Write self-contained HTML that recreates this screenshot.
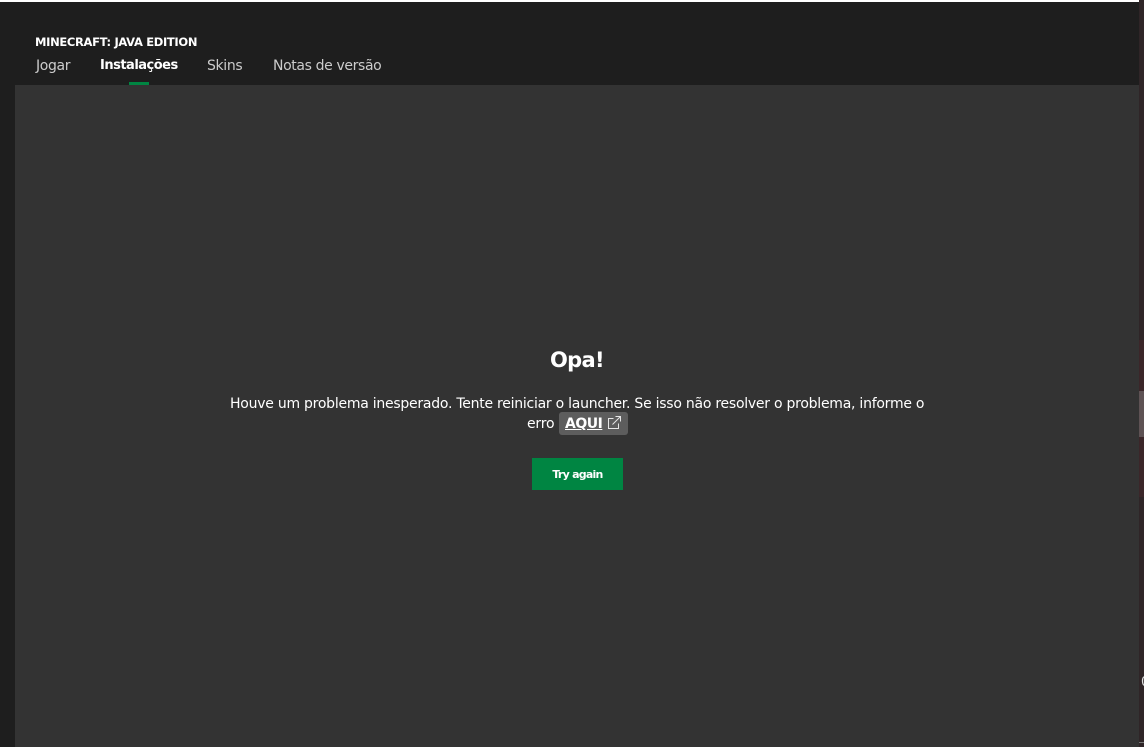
<!DOCTYPE html>
<html lang="pt">
<head>
<meta charset="utf-8">
<title>Minecraft Launcher</title>
<style>
html,body{margin:0;padding:0;width:1144px;height:747px;overflow:hidden;background:#1e1e1e;}
body{position:relative;font-family:"DejaVu Sans","Liberation Sans",sans-serif;color:#fff;}
div,span,a{position:absolute;white-space:nowrap;}
.t{line-height:20px;}
</style>
</head>
<body>
<div style="left:0;top:0;width:1139px;height:2px;background:#fff"></div>
<div style="left:15px;top:85px;width:1124px;height:662px;background:#333"></div>
<div style="left:1139px;top:0;width:5px;height:747px;background:#2f2527"></div>
<div style="left:1139px;top:340px;width:5px;height:51px;background:#3b2629"></div>
<div style="left:1139px;top:391px;width:5px;height:46px;background:#5e5254"></div>
<div style="left:1139px;top:437px;width:5px;height:60px;background:#3b2629"></div>
<div class="t" style="left:1141px;top:673px;font-size:13px;color:#ddd;width:3px;overflow:hidden">0</div>
<div style="left:1139px;top:742px;width:5px;height:1px;background:#777"></div>

<div class="t" style="left:35px;top:32px;font-size:11.5px;font-weight:bold;letter-spacing:-.33px;">MINECRAFT: JAVA EDITION</div>
<div class="t" style="left:36px;top:56px;font-size:14px;color:#ccc;letter-spacing:-.35px;">Jogar</div>
<div class="t" style="left:100px;top:56px;font-size:13px;font-weight:bold;letter-spacing:-.5px;">Instalações</div>
<div class="t" style="left:207px;top:56px;font-size:14px;color:#ccc;letter-spacing:-.35px;">Skins</div>
<div class="t" style="left:273px;top:56px;font-size:14px;color:#ccc;letter-spacing:-.37px;">Notas de versão</div>
<div style="left:129px;top:82px;width:20px;height:3px;background:#008542"></div>

<div style="left:550px;top:346px;line-height:28px;font-size:21px;font-weight:bold;letter-spacing:-.7px;">Opa!</div>
<div class="t" style="left:230px;top:394px;font-size:14px;letter-spacing:-.25px;">Houve um problema inesperado. Tente reiniciar o launcher. Se isso não resolver o problema, informe o</div>
<div class="t" style="left:527px;top:414px;font-size:14px;letter-spacing:-.2px;">erro</div>
<div style="left:559px;top:412px;width:69px;height:23px;background:#5d5d5d;border-radius:3px"></div>
<div class="t" style="left:565px;top:414px;font-size:14px;font-weight:bold;text-decoration:underline;letter-spacing:-.5px;">AQUI</div>
<svg style="position:absolute;left:607px;top:415px" width="15" height="15" viewBox="0 0 15 15" fill="none" stroke="#e6e6e6" stroke-width="1">
<path d="M6.5 3.5H1.5V13.5H11.5V8.5"/>
<path d="M5.5 9.5L13.5 1.5M8.5 1.5H13.5V6.5"/>
</svg>
<div style="left:532px;top:458px;width:91px;height:32px;background:#008542"></div>
<div style="left:532px;top:459px;width:91px;line-height:31px;text-align:center;font-size:11px;font-weight:bold;letter-spacing:-.75px;">Try again</div>
</body>
</html>
